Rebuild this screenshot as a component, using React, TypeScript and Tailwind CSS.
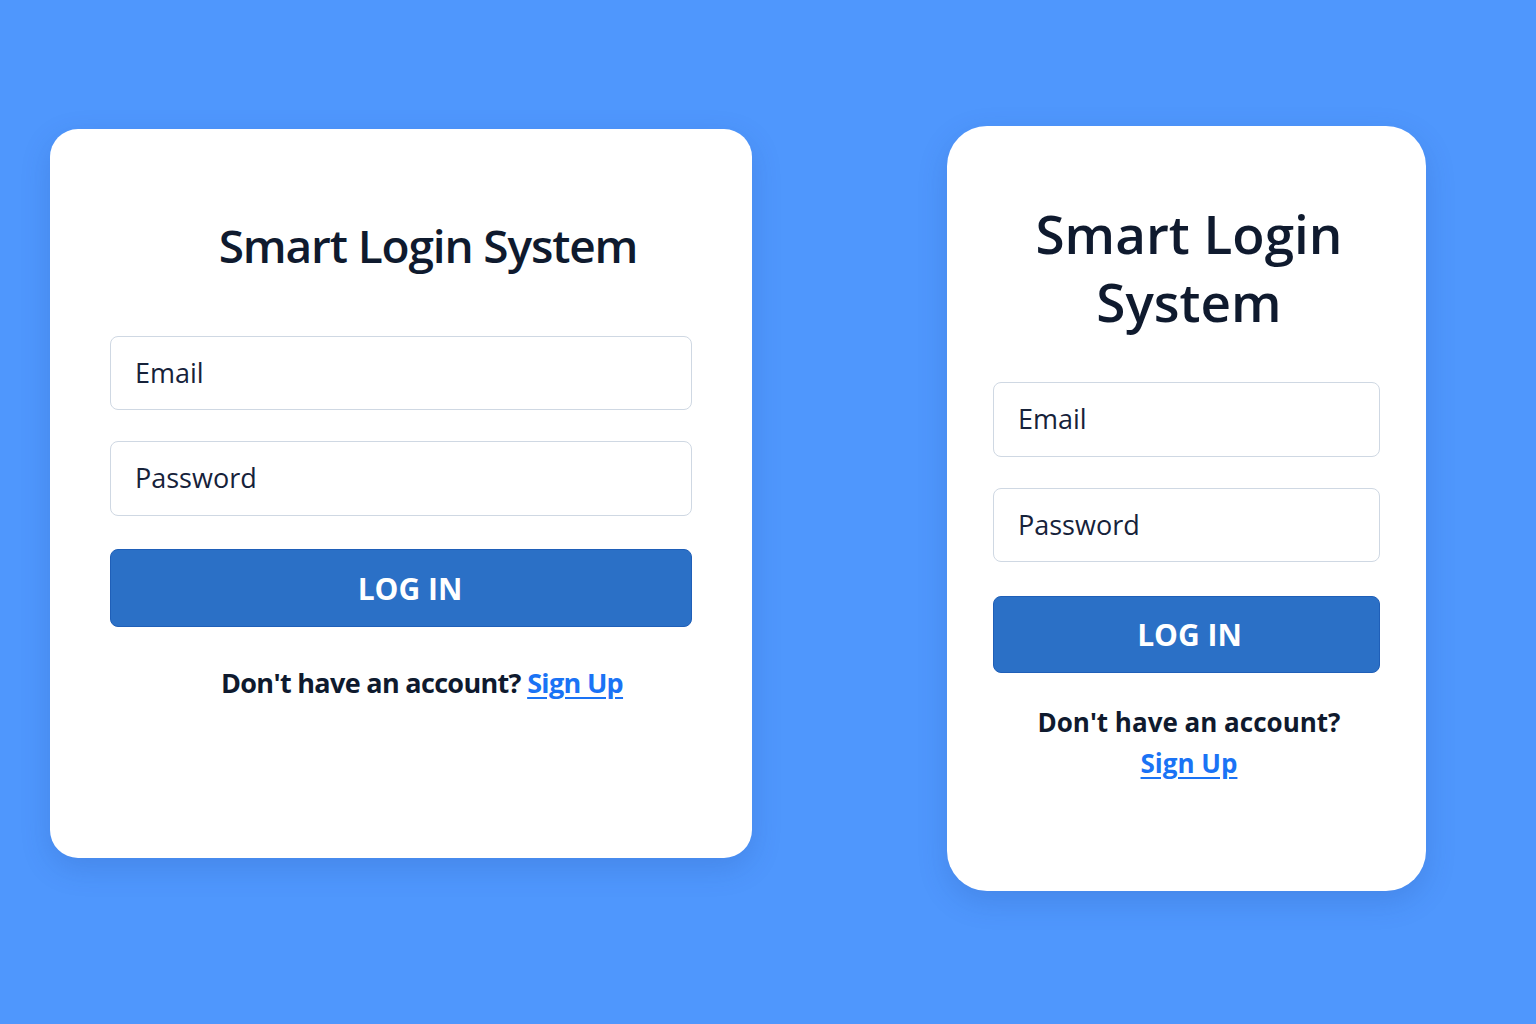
const font = { fontFamily: '"Open Sans", "Noto Sans", sans-serif' };

function Field({ label, className }: { label: string; className: string }) {
  return (
    <div
      className={`flex items-center rounded-lg border border-[#cfd8e3] bg-white px-6 text-[27px] text-[#16223a] ${className}`}
    >
      {label}
    </div>
  );
}

export default function App() {
  return (
    <div className="min-h-screen w-full bg-[#4f97fd]" style={font}>
      <div className="flex items-start pl-[50px] pt-[126px]">
        {/* wide card */}
        <div className="mt-[3px] flex h-[729px] w-[702px] flex-col rounded-[28px] bg-white px-[60px] pt-[84px] shadow-[0_10px_30px_rgba(30,60,140,0.18)]">
          <h1 className="pl-[54px] text-center text-[46px] font-semibold leading-[64px] tracking-tight text-[#0f1a2e]">
            Smart Login System
          </h1>
          <div className="mt-[59px] flex flex-col gap-[31px]">
            <Field label="Email" className="h-[74px]" />
            <Field label="Password" className="h-[75px]" />
          </div>
          <button className="mt-[33px] h-[78px] w-full rounded-lg border border-[#1f5fb8] bg-[#2b70c6] pl-[18px] text-[30px] font-bold text-white">
            LOG IN
          </button>
          <p className="mt-[36px] pl-[42px] text-center text-[27px] font-bold tracking-tight text-[#0f1a2e]">
            Don't have an account?{' '}
            <a href="#" className="text-[#1a73f5] underline underline-offset-4">
              Sign Up
            </a>
          </p>
        </div>

        {/* narrow card */}
        <div className="ml-[195px] flex h-[765px] w-[479px] flex-col rounded-[40px] bg-white px-[46px] pt-[74px] shadow-[0_10px_30px_rgba(30,60,140,0.18)]">
          <h1 className="pl-[5px] text-center text-[53px] font-semibold leading-[68px] text-[#0f1a2e]">
            Smart Login
            <br />
            System
          </h1>
          <div className="mt-[46px] flex flex-col gap-[31px]">
            <Field label="Email" className="h-[75px]" />
            <Field label="Password" className="h-[74px]" />
          </div>
          <button className="mt-[34px] h-[77px] w-full rounded-lg border border-[#1f5fb8] bg-[#2b70c6] pl-[6px] text-[30px] font-bold text-white">
            LOG IN
          </button>
          <p className="mt-[29px] pl-[5px] text-center text-[26px] font-bold leading-[41px] text-[#0f1a2e]">
            Don't have an account?
            <br />
            <a href="#" className="text-[#1a73f5] underline underline-offset-4">
              Sign Up
            </a>
          </p>
        </div>
      </div>
    </div>
  );
}
